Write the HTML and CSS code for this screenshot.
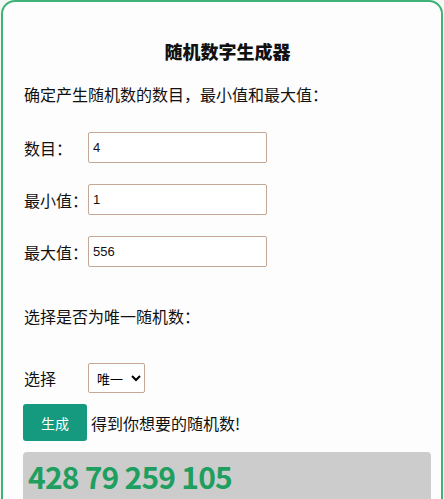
FILE: index.html
```html
<!DOCTYPE html>
<html lang="zh">
<head>
    <meta charset="UTF-8">
    <meta name="viewport" content="width=device-width, initial-scale=1.0">
    <title>随机数字生成器</title>
    <link rel="stylesheet" href="styles.css">
</head>
<body>
    <div class="card">
        <h2>随机数字生成器</h2>
        <p class="intro">确定产生随机数的数目，最小值和最大值：</p>
        <div class="row"><label>数目：</label><input type="text" class="field" value="4"></div>
        <div class="row"><label>最小值：</label><input type="text" class="field" value="1"></div>
        <div class="row"><label>最大值：</label><input type="text" class="field" value="556"></div>
        <p class="intro unique">选择是否为唯一随机数：</p>
        <div class="row pick"><label>选择</label>
            <select class="choice"><option>唯一</option><option>可重复</option></select>
        </div>
        <div class="action">
            <button class="gen">生成</button><span>得到你想要的随机数!</span>
        </div>
        <div class="result">428 79 259 105</div>
    </div>
</body>
</html>
```

FILE: styles.css
```css
body { margin: 0; background: #f4f7f3; font-family: "Noto Sans CJK SC", "Noto Sans", sans-serif; color: #111; overflow: hidden; }
.card { margin: 0 1px; background: #fdfdfd; border: 2px solid #3fb277; border-radius: 14px; padding: 0 10px 20px 21px; height: 560px; box-sizing: border-box; }
h2 { font-size: 18px; text-align: center; margin: 0; padding-top: 35px; line-height: 28px; font-weight: 900; }
.intro { font-size: 16px; margin: 17px 0 0; line-height: 24px; }
.row { display: flex; align-items: center; margin-top: 21px; font-size: 16px; }
.row + .row { margin-top: 21px; }
.intro + .row { margin-top: 26px; }
.row label { width: 64px; }
.field { width: 179px; height: 31px; box-sizing: border-box; border: 1px solid #c4a795; border-radius: 2px; padding: 0 4px; font-family: "Liberation Sans", Arial, sans-serif; font-size: 13px; color: #111; background: #fff; }
.unique { margin-top: 37px; }
.pick { margin-top: 35px !important; }
.choice { width: 57px; height: 30px; border: 1px solid #c4a795; border-radius: 2px; background: #fff; font-family: "Noto Sans CJK SC", sans-serif; font-size: 13px; padding: 0 2px 0 4px; }
.action { display: flex; align-items: center; margin-top: 11px; margin-left: -1px; font-size: 16px; }
.gen { width: 64px; height: 37px; background: #159a80; color: #fff; border: none; border-radius: 3px; font-family: "Noto Sans CJK SC", sans-serif; font-size: 14px; margin-right: 4px; }
.result { margin: 11px 0 0 -1px; background: #cccccc; border-radius: 4px; height: 60px; padding: 2px 5px 0; font-family: "Noto Sans CJK SC", sans-serif; font-weight: bold; font-size: 30px; color: #1e9e5f; line-height: 44px; letter-spacing: -0.8px; }
```
